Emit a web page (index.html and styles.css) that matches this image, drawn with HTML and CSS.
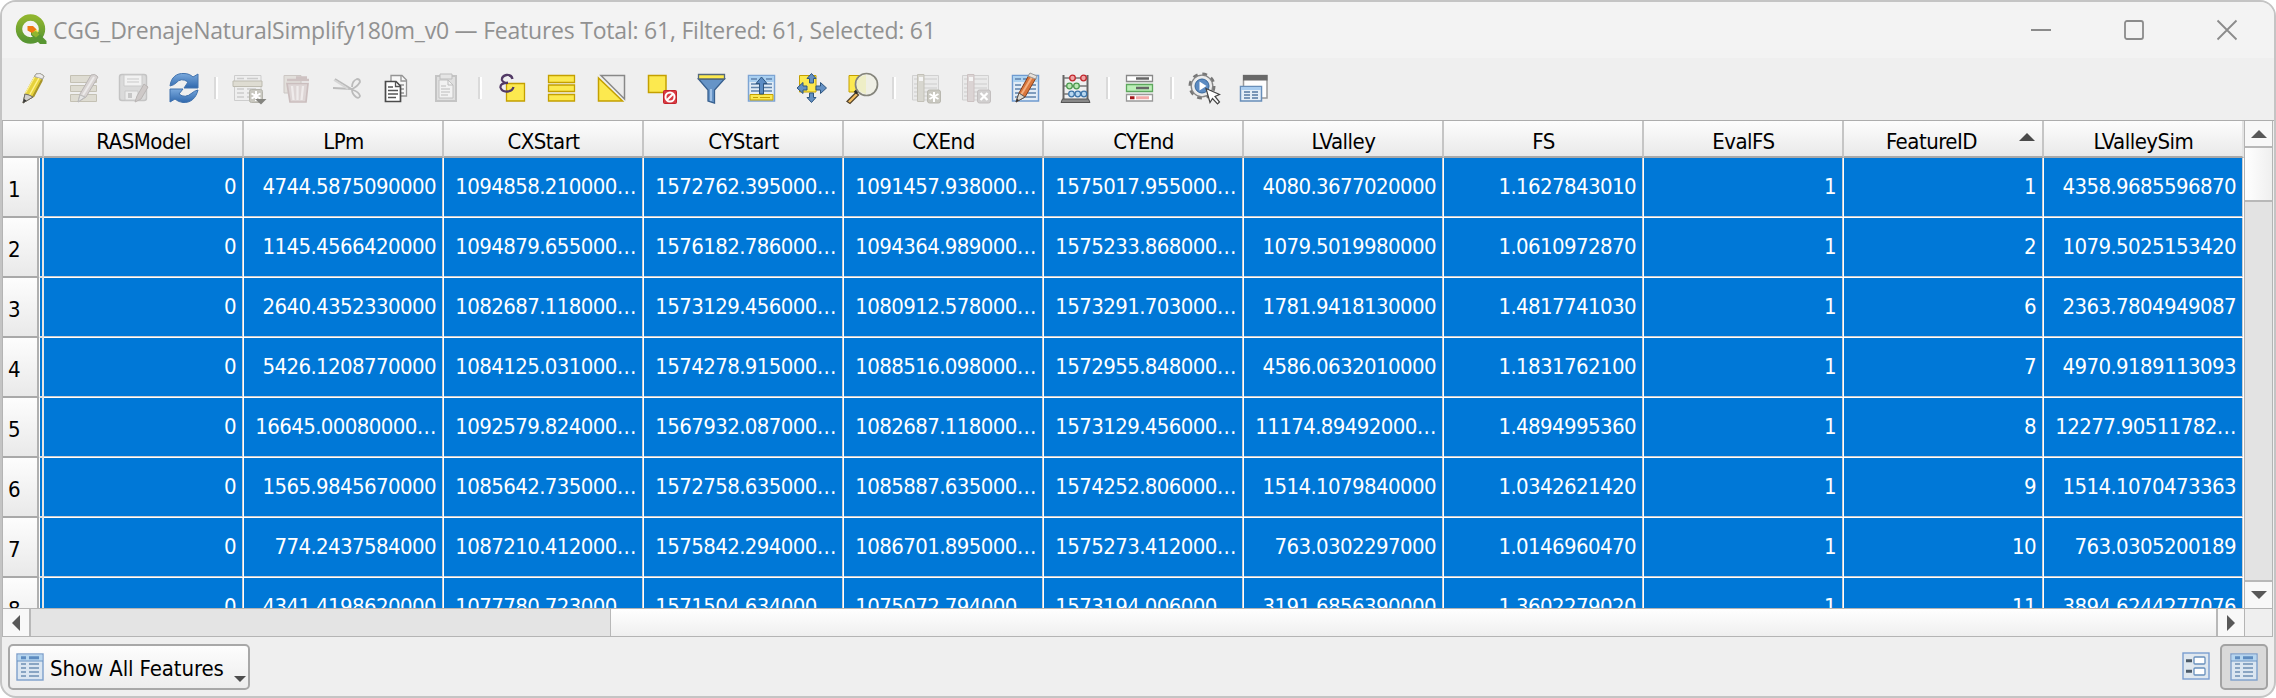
FILE: index.html
```html
<!DOCTYPE html>
<html lang="en">
<head>
<meta charset="utf-8">
<title>Attribute table</title>
<link rel="stylesheet" href="styles.css">
</head>
<body>
<svg width="0" height="0" class="defs">
  <defs>
    <linearGradient id="blue" x1="0" y1="0" x2="0" y2="1"><stop offset="0" stop-color="#7aa9dd"/><stop offset="1" stop-color="#2f68ad"/></linearGradient>
    <linearGradient id="qgreen" x1="0" y1="0" x2="0" y2="1"><stop offset="0" stop-color="#8fb52f"/><stop offset="1" stop-color="#589632"/></linearGradient>
    <symbol id="table" viewBox="0 0 28 28">
      <rect x="1" y="1" width="26" height="26" fill="#dbe6f1" stroke="#7d9fcb" stroke-width="1.4"/>
      <rect x="1.7" y="1.7" width="24.6" height="6" fill="#b5d5ef"/>
      <path d="M1 8H27" stroke="#6b93c3" stroke-width="1.2"/>
      <path d="M5 4.7H10M13 4.7H23" stroke="#5e8cc0" stroke-width="3"/>
      <path d="M5 11H10M13 11H23M5 15H10M13 15H23M5 19H10M13 19H23M5 23H10M13 23H23" stroke="#6f90b4" stroke-width="1.3"/>
    </symbol>
  </defs>
</svg>
<div class="window">
  <header class="titlebar">
    <svg class="logo" viewBox="0 0 32 32">
      <circle cx="15.5" cy="15" r="11.5" fill="none" stroke="url(#qgreen)" stroke-width="6.4"/>
      <path d="M16 16l4.500 0 11 11v3h-6.500l-9-9z" fill="#589632"/>
      <path d="M16.500 16.500l3-3 4 4-3.500 3.500z" fill="#f0e64a"/>
      <path d="M17 18l4-1 3.500 3.500-3.500 3-4-3z" fill="#8fb52f"/>
      <path d="M12.500 12h5.500l3.500 3.500-4.500 3.500-4.500-2.500z" fill="#ee7913"/>
    </svg>
    <h1 class="title">CGG_DrenajeNaturalSimplify180m_v0 — Features Total: 61, Filtered: 61, Selected: 61</h1>
    <div class="controls">
      <svg viewBox="0 0 22 22"><path d="M1 11H21" class="ctl"/></svg>
      <svg viewBox="0 0 22 22"><rect x="2" y="2" width="18" height="18" rx="2" class="ctl"/></svg>
      <svg viewBox="0 0 22 22"><path d="M1.500 1.500L20.500 20.500M20.500 1.500L1.500 20.500" class="ctl"/></svg>
    </div>
  </header>
  <nav class="toolbar">
    <svg class="ic" viewBox="0 0 32 32"><path d="M5 31L7 22 18 2Q22 0 26 4L15 25Z" fill="#e6d23c" stroke="#77703a"/><path d="M18 2Q22 0 26 4L24.500 7 16.500 4.500Z" fill="#eceaea" stroke="#aaa"/><path d="M16.500 5L7 22M21 6L11 24" stroke="#fff08a" stroke-width="1.500"/><path d="M24 8L15 25" stroke="#a8952a" stroke-width="2"/><path d="M5 31L7 22 11 23 15 25Z" fill="#d2d0cc" stroke="#6c6a66"/><path d="M5 31L6 27 8.500 28.500Z" fill="#333"/></svg>
    <svg class="ic" viewBox="0 0 32 32"><g fill="#dedcd2" stroke="#c4c1b4"><path d="M2.500 3.500H28.500V10.500H2.500ZM2.500 13.500H28.500V19.500H2.500ZM2.500 22.500H28.500V29.500H2.500Z"/></g><path d="M10 30L12 22 23 3Q27 1 30 5L18 25Z" fill="#d8d3d2" stroke="#b9b5b4"/><path d="M15 23L26 5" stroke="#eceaea" stroke-width="2"/><path d="M10 30L12 23 17 25Z" fill="#e5e5e5" stroke="#bbb"/></svg>
    <svg class="ic" viewBox="0 0 32 32"><rect x="1.500" y="2.500" width="27" height="26" rx="2.500" fill="#dadada" stroke="#c4c4c4" stroke-width="1.500"/><path d="M6 3H24V14H6Z" fill="#f2f2f2" stroke="#cacaca"/><path d="M9 7H21M9 10H21" stroke="#c9c9c9"/><path d="M7 19H20V28H7Z" fill="#ececec" stroke="#cacaca"/><path d="M10 21H14V26H10Z" fill="#c7c7c7"/><path d="M17 30L19 24 26 12 30 15 23 27Z" fill="#cec9c8" stroke="#b9b5b4"/></svg>
    <svg class="ic" viewBox="0 0 32 32"><path d="M2 14C3 5 9 1 16 1.500 20 1.500 23 3 25 5L30 2V16H16L20 10Q13 5 8 11Q6 13 2 14Z" fill="url(#blue)" stroke="#4474ae"/><path d="M30 18C28 26 23 31 15 30.500Q10 30 7 27L2 30V17H15L11 22Q17 27 24 21Q26 19 30 18Z" fill="url(#blue)" stroke="#3f71ad"/></svg>
    <i class="sep"></i>
    <svg class="ic" viewBox="0 0 32 32"><path d="M2.500 3.500H29V28.500H2.500Z" fill="#eee" stroke="#cdcdcd"/><path d="M5 6.500H12M15 6.500H26M5 17H12M15 17H24M5 21H12M15 21H19M5 25H12M15 25H19" stroke="#ccc" stroke-width="1.500"/><path d="M1 9H30V14.500H1Z" fill="#dedcd2" stroke="#bdbbb0"/><rect x="17.500" y="17.500" width="13" height="13" rx="2" fill="#c9c8c0" stroke="#b5b4ac"/><path d="M24 19V29M19.500 21.500L28.500 26.500M28.500 21.500L19.500 26.500" stroke="#fff" stroke-width="2"/><path d="M23 27H34.500L29 32.500Z" fill="#858580"/></svg>
    <svg class="ic" viewBox="0 0 32 32"><path d="M2 3.500H19V21H2Z" fill="#e2dfdb" stroke="#ccc7c4"/><path d="M5 8H27M14 5.500H25" fill="none" stroke="#cec2c2" stroke-width="2.500"/><path d="M5 11.500H26L24 30H8Z" fill="#ddd5d5" stroke="#cbbebe" stroke-width="1.700"/><path d="M10 14L11.500 28M15.500 14V28M21 14L19.500 28" stroke="#efebeb" stroke-width="2.300"/></svg>
    <svg class="ic" viewBox="0 0 32 32"><g fill="none" stroke="#bbb" stroke-width="1.800"><path d="M1 16L20 17Q25 15 28 10Q28 7 25 7Q20 9 20 15M3 7L21 18Q27 20 28 24Q27 27 24 25Q20 22 20 18"/><path d="M2 8L16 17" stroke="#d6d6d6"/></g></svg>
    <svg class="ic" viewBox="0 0 32 32"><g fill="#f7f7f7" stroke="#949494" stroke-width="1.300"><path d="M9 3.500H20L24.500 8V24H9Z"/><path d="M19 4V9H24M18 13H22M19 17H22M19 21H22" fill="none"/></g><path d="M3.500 9.500H14L18.500 14V29.500H3.500Z" fill="#fff" stroke="#4b4b4b" stroke-width="1.700"/><path d="M13.500 9.500V14.500H18.500M6 15H11M6 18.500H16M6 22H16M6 25.500H14" fill="none" stroke="#555" stroke-width="1.300"/></svg>
    <svg class="ic" viewBox="0 0 32 32"><path d="M4 4H24V29H4Z" fill="#dfdfdf" stroke="#c4c4c4" stroke-width="2"/><path d="M7 8H16L21 13V26H7Z" fill="#f2f2f2" stroke="#c2c2c2"/><path d="M8 2H20V7H8Z" fill="#e5e5e5" stroke="#bdbdbd"/><path d="M16 8V13H21M9 14H14M9 17H18M9 20H18M9 23H16" fill="none" stroke="#bcbcbc"/></svg>
    <i class="sep"></i>
    <svg class="ic" viewBox="0 0 32 32"><path d="M10.500 11.500H28.500V29H10.500Z" fill="#fce94f" stroke="#c4a000" stroke-width="1.300"/><path d="M16.500 7Q15.500 2.500 10.500 3Q5.500 4 6 8Q7 11 12 10.800Q4 11 4.500 15.500Q6 20 11.500 19.500Q16.500 19 17.500 15" fill="none" stroke="#523a66" stroke-width="2.300"/></svg>
    <svg class="ic" viewBox="0 0 32 32"><path d="M2.500 3.500H28.500V10.500H2.500ZM2.500 13H28.500V19.500H2.500ZM2.500 22.500H28.500V29H2.500Z" fill="#fce94f" stroke="#c4a000" stroke-width="1.300"/></svg>
    <svg class="ic" viewBox="0 0 32 32"><path d="M5 3.500H28.500V27Z" fill="#ebebeb" stroke="#888" stroke-width="1.500"/><path d="M2.500 6V29H26.500Z" fill="#fce94f" stroke="#c4a000" stroke-width="1.500"/></svg>
    <svg class="ic" viewBox="0 0 32 32"><path d="M2.500 3.500H20V20.500H2.500Z" fill="#fce94f" stroke="#c4a000" stroke-width="1.500"/><rect x="17.500" y="18.500" width="13" height="13" rx="1" fill="#d83b43" stroke="#c32229"/><circle cx="24" cy="25" r="4.500" fill="none" stroke="#fff" stroke-width="2"/><path d="M21 28L27 22" stroke="#fff" stroke-width="2"/></svg>
    <svg class="ic" viewBox="0 0 32 32"><path d="M2.500 7L12 18V29L18.500 31V18L28.500 7Z" fill="#6694c7" stroke="#375f8e" stroke-width="1.300"/><path d="M15 17V29" stroke="#9fc0e5" stroke-width="2"/><path d="M2.500 2.500H28.500V7H2.500Z" fill="#fce94f" stroke="#55687b" stroke-width="1.300"/></svg>
    <svg class="ic" viewBox="0 0 32 32"><path d="M2.500 3.500H28.500V29H2.500Z" fill="#e1ecf6" stroke="#7da4d3" stroke-width="1.500"/><path d="M3 4H28V10H3Z" fill="#a9cff0"/><path d="M5 7H11M20 7H26M5 12H26M5 15.500H26M5 19H26" stroke="#5f83ac" stroke-width="1.300"/><path d="M4 22.500H27V28H4Z" fill="#fce94f" stroke="#c4a000"/><path d="M7 25.500H12M14 25.500H24" stroke="#c4a000"/><path d="M15.500 5L21 11.500H17.500V22H13.500V11.500H10Z" fill="#5b8cc4" stroke="#2f5680"/></svg>
    <svg class="ic" viewBox="0 0 32 32"><path d="M3.500 3.500H20V20H3.500Z" fill="#fce94f" stroke="#c4a000"/><g fill="#6390c3" stroke="#2f5680"><path d="M15.500 1.500L20 6.500H17.500V11H13.500V6.500H11Z"/><path d="M15.500 30.500L20 25.500H17.500V21H13.500V25.500H11Z"/><path d="M1 16L7 10.500V14H11V18H7V21.500Z"/><path d="M30.500 16L24.500 10.500V14H20V18H24.500V21.500Z"/></g></svg>
    <svg class="ic" viewBox="0 0 32 32"><path d="M3 3.500H19V20H3Z" fill="#fce94f" stroke="#c4a000"/><path d="M1 29.500L10 20.500 12.500 23 4 31.500Z" fill="#f4be60" stroke="#54452c" stroke-width="1.300"/><path d="M9 21L13 17" stroke="#292929" stroke-width="3.500"/><circle cx="20.500" cy="12.500" r="11" fill="#efefe5" stroke="#85857c" stroke-width="1.700"/><path d="M11 9.500Q12 4.500 20 3V22Q12 20 11 15Z" fill="#eeeec6"/></svg>
    <i class="sep"></i>
    <svg class="ic" viewBox="0 0 32 32"><path d="M2.500 3.500H28.500V28H2.500Z" fill="#eaeaea" stroke="#d1d1d1"/><path d="M4 7H27M4 12H27M4 16H27M4 20H27M4 24H18" stroke="#ccc"/><path d="M7.500 2.500H14V29.500H7.500Z" fill="#d8d7d0" stroke="#c3c1b8"/><path d="M9 5H13V9H9Z" fill="#f5f5f5"/><rect x="17.500" y="18" width="13" height="13" rx="2" fill="#c9c8c0" stroke="#b9b8b0"/><path d="M24 20V30M19.500 22L28.500 27M28.500 22L19.500 27" stroke="#fff" stroke-width="2"/></svg>
    <svg class="ic" viewBox="0 0 32 32"><path d="M2.500 3.500H28.500V28H2.500Z" fill="#eaeaea" stroke="#d1d1d1"/><path d="M4 7H27M4 12H27M4 16H27M4 20H27M4 24H18" stroke="#ccc"/><path d="M7.500 2.500H14V29.500H7.500Z" fill="#dbd4d4" stroke="#ccc2c2"/><path d="M9 5H13V9H9Z" fill="#f5f5f5"/><rect x="17.500" y="18" width="13" height="13" rx="2" fill="#d1cfcf" stroke="#c3bfbf"/><path d="M20.500 21L27.500 28M27.500 21L20.500 28" stroke="#fff" stroke-width="2.300"/></svg>
    <svg class="ic" viewBox="0 0 32 32"><path d="M2.500 3.500H28.500V29H2.500Z" fill="#e3edf6" stroke="#6f9bd0" stroke-width="1.500"/><path d="M3 4H28V10H3Z" fill="#add2f0"/><path d="M5 7H11M13 7H24M5 13H11M13 13H26M5 17H11M13 17H26M5 21H11M13 21H26M5 25H11M13 25H26" stroke="#5f83ac" stroke-width="1.300"/><path d="M6 30L9 21 19 3 26 6 15 25Z" fill="#d9763c" stroke="#843f1b"/><path d="M11 23L22 5" stroke="#f5b07f" stroke-width="2"/><path d="M18 4L20 1 27 4 25.500 7Z" fill="#e7e1db" stroke="#999"/><path d="M6 30L9 21 15 25Z" fill="#ddd8cf" stroke="#555"/><path d="M6 30L7 27 9 28Z" fill="#222"/></svg>
    <svg class="ic" viewBox="0 0 32 32"><path d="M3.500 3V27M27.500 3V27" stroke="#666" stroke-width="2"/><path d="M4 6H27M4 14H27M4 22H27" stroke="#777" stroke-width="1.500"/><path d="M2.500 27H28.500L30 30.500H1Z" fill="#888" stroke="#555"/><g stroke-width="1.300"><g fill="#f1a6a6" stroke="#c1272d"><circle cx="12.500" cy="6" r="2.800"/><circle cx="23.500" cy="6" r="2.800"/></g><g fill="#bce9b4" stroke="#4e9a50"><circle cx="9.500" cy="14" r="2.800"/><circle cx="16.500" cy="14" r="2.800"/></g><g fill="#b9d8f0" stroke="#3f76aa"><circle cx="11.500" cy="22" r="2.800"/><circle cx="17.800" cy="22" r="2.800"/><circle cx="24" cy="22" r="2.800"/></g></g></svg>
    <i class="sep"></i>
    <svg class="ic" viewBox="0 0 32 32"><g stroke-width="1.300"><path d="M2.500 3.500H28.500V9.500H2.500Z" fill="#fff" stroke="#888"/><path d="M2.500 12.500H28.500V19.500H2.500Z" fill="#bdf0b8" stroke="#5ea75d"/><path d="M2.500 22.500H28.500V29H2.500Z" fill="#fff" stroke="#999"/></g><path d="M12 6.500H25M12 16H25" stroke="#666" stroke-width="2.300"/><path d="M6 25.700H10.500" stroke="#a4161a" stroke-width="3"/><path d="M12 25.700H25" stroke="#f2a9a9" stroke-width="3"/></svg>
    <i class="sep"></i>
    <svg class="ic" viewBox="0 0 32 32"><circle cx="14" cy="14" r="12" fill="none" stroke="#777" stroke-width="3" stroke-dasharray="4.700 4.720"/><circle cx="14" cy="14" r="10.800" fill="#ececec" stroke="#858585" stroke-width="1.300"/><circle cx="14" cy="14" r="7" fill="#5c8bc2" stroke="#386799"/><path d="M11.500 9.500L18.500 14 11.500 18.500Z" fill="#fff"/><path d="M18 16.500L31.500 22.500 27 24.500 31.500 30 29.500 32 24.500 26.500 22 30.500Z" fill="#fff" stroke="#444" stroke-width="1.200"/></svg>
    <svg class="ic" viewBox="0 0 32 32"><path d="M5.500 3.500H29V26H5.500Z" fill="#fdfdfd" stroke="#999" stroke-width="1.500"/><path d="M5 3H29.500V8.500H5Z" fill="#686868"/><path d="M2.500 14.500H23.500V29H2.500Z" fill="#e5eef7" stroke="#688eb9" stroke-width="1.500"/><path d="M3.200 15H23V18H3.200Z" fill="#a9cdf0"/><path d="M6 20H12M14 20H20M6 23H12M14 23H20M6 26H12M14 26H20" stroke="#5679a3" stroke-width="1.500"/></svg>
  </nav>
  <main class="view">
    <div class="grid" id="grid"></div>
    <div class="vbar">
      <div class="arrow up"><svg viewBox="0 0 16 8"><path d="M0 8L8 0 16 8Z"/></svg></div>
      <div class="vthumb"></div>
      <div class="vtrack"></div>
      <div class="arrow down"><svg viewBox="0 0 16 8"><path d="M0 0L8 8 16 0Z"/></svg></div>
    </div>
    <div class="hbar">
      <div class="harrow left"><svg viewBox="0 0 8 16"><path d="M8 0L0 8 8 16Z"/></svg></div>
      <div class="htrack"></div>
      <div class="hthumb"></div>
      <div class="harrow right"><svg viewBox="0 0 8 16"><path d="M0 0L8 8 0 16Z"/></svg></div>
    </div>
    <div class="corner"></div>
  </main>
  <footer class="status">
    <button class="filter"><svg class="tbl" viewBox="0 0 28 28"><use href="#table"/></svg><span>Show All Features</span><svg class="drop" viewBox="0 0 12 6"><path d="M0 0H12L6 6Z"/></svg></button>
    <svg class="form" viewBox="0 0 28 28"><rect x="1" y="1" width="26" height="26" fill="#e0e8ef" stroke="#7b9fd0" stroke-width="1.400"/><path d="M4 8.700H10M4 19.300H10" stroke="#4d5b69" stroke-width="3"/><rect x="12" y="5" width="11" height="7" rx="1" fill="#fff" stroke="#6890bd" stroke-width="1.300"/><rect x="12" y="16" width="11" height="7" rx="1" fill="#fff" stroke="#6890bd" stroke-width="1.300"/></svg>
    <button class="tableview"><svg class="tbl" viewBox="0 0 28 28"><use href="#table"/></svg></button>
  </footer>
</div>
<script src="table.js"></script>
</body>
</html>
```
FILE: styles.css
```css
* { box-sizing: border-box; }
body { margin: 0; background: #fff; width: 2276px; height: 698px; overflow: hidden; }
.defs { display: block; height: 0; }
.window {
  width: 2276px; height: 698px; border: 2px solid #c4c4c4; border-radius: 16px;
  background: #efefef; overflow: hidden; display: flex; flex-direction: column;
  font-family: "DejaVu Sans Condensed", "DejaVu Sans", sans-serif; font-stretch: condensed;
  font-size: 22px; color: #000;
}
.titlebar { height: 56px; flex: none; background: #f3f3f3; display: flex; align-items: center; padding: 0 36px 0 13px; }
.logo { width: 32px; height: 32px; }
.title {
  margin: 0 0 0 6px; font: 400 23px/30px "Open Sans", "Noto Sans", sans-serif;
  color: #919191; white-space: nowrap; letter-spacing: -0.22px;
}
.controls { margin-left: auto; display: flex; gap: 71px; }
.controls svg { width: 22px; height: 22px; }
.ctl { fill: none; stroke: #8b8b8b; stroke-width: 1.8; }
.toolbar { height: 62px; flex: none; display: flex; align-items: center; gap: 18px; padding: 0 0 2px 16px; }
.ic { width: 32px; height: 32px; overflow: visible; flex: none; }
.sep { width: 4px; height: 22px; background: #fff; border-left: 2px solid #dadada; margin: 0 -4px; flex: none; }
.view {
  height: 517px; flex: none; display: grid; grid-template-columns: 2241px 29px; grid-template-rows: 487px 29px;
  border-top: 1px solid #adadad; border-left: 1px solid #b4b4b4;
}
.grid { overflow: hidden; background: #fff; }
.row { display: flex; height: 60px; }
.row.head { height: 37px; }
.hc {
  width: 200px; flex: none; background: linear-gradient(#fdfdfd, #f3f3f3 50%, #e9e9e9);
  border-right: 2px solid #c5c5c5; border-bottom: 2px solid #a9a9a9;
  display: flex; align-items: center; justify-content: center; letter-spacing: -0.5px; position: relative; padding: 5px 0 0 1px;
}
.hc.first { width: 41px; }
.hc.sorted { padding-right: 24px; }
.hc:last-child { border-right-color: #e4e4e4; }
.sort { position: absolute; right: 7px; top: 12px; width: 16px; height: 8px; fill: #4a4a4a; }
.rh {
  width: 36px; flex: none; background: linear-gradient(#fdfdfd, #f3f3f3 50%, #e9e9e9);
  border-right: 2px solid #b0b0b0; border-bottom: 2px solid #a9a9a9; padding: 4px 0 0 5px; line-height: 56px; letter-spacing: -0.5px;
}
.strip { width: 5px; flex: none; background: #0078d7; border-left: 1px solid #fff; border-right: 2px solid #e6e6e6; border-bottom: 2px solid #e2e2e2; }
.c {
  width: 200px; flex: none; background: #0078d7; color: #fff; text-align: right; line-height: 58px;
  padding-right: 7px; border-right: 1px solid #fff; border-bottom: 1px solid #fff;
  box-shadow: inset -1px -1px #c9ccd0;
  letter-spacing: -0.6px; white-space: nowrap; overflow: hidden;
}
.vbar { display: flex; flex-direction: column; border-left: 1px solid #b4b4b4; border-right: 1px solid #b4b4b4; }
.arrow { height: 27px; flex: none; background: #f8f8f8; display: flex; align-items: center; justify-content: center; }
.arrow svg { width: 16px; height: 8px; fill: #585858; }
.up { border-bottom: 2px solid #b8b8b8; }
.down { height: 28px; border-top: 2px solid #b8b8b8; }
.vthumb { height: 54px; flex: none; background: linear-gradient(90deg, #fff, #efefef); border-bottom: 2px solid #b8b8b8; }
.vtrack { flex: 1; background: #e3e3e3; }
.hbar { display: flex; border-top: 1px solid #b4b4b4; border-bottom: 1px solid #b4b4b4; }
.harrow { width: 28px; flex: none; background: #f8f8f8; display: flex; align-items: center; justify-content: center; }
.harrow svg { width: 8px; height: 16px; fill: #585858; }
.left { border-right: 2px solid #b8b8b8; }
.right { border-left: 2px solid #b8b8b8; }
.htrack { width: 580px; flex: none; background: #e4e4e4; border-right: 1px solid #b8b8b8; }
.hthumb { flex: 1; background: linear-gradient(#fff, #efefef); }
.corner { border: 1px solid #b4b4b4; background: #efefef; }
.status { flex: 1; display: flex; align-items: flex-start; padding: 7px 6px 0 6px; }
button { font: inherit; padding: 0; color: inherit; }
.filter {
  width: 242px; height: 46px; border: 2px solid #a8a8a8; border-radius: 5px; background: linear-gradient(#fdfdfd, #ededed);
  display: flex; align-items: center; padding-left: 6px; letter-spacing: -0.1px; white-space: nowrap;
}
.filter span { margin: 3px 0 0 6px; }
.tbl, .form { width: 28px; height: 28px; flex: none; }
.drop { width: 12px; height: 6px; margin: 24px 2px 0 auto; fill: #4d4d4d; flex: none; }
.form { margin: 8px 10px 0 auto; }
.tableview { width: 48px; height: 46px; border: 2px solid #a3a3a3; border-radius: 5px; background: #d9d9d9; display: flex; align-items: center; justify-content: center; }
```
FILE: table.js
```js
const columns = ["RASModel","LPm","CXStart","CYStart","CXEnd","CYEnd","LValley","FS","EvalFS","FeatureID","LValleySim"];
const rows = [
  ["0","4744.5875090000","1094858.210000…","1572762.395000…","1091457.938000…","1575017.955000…","4080.3677020000","1.1627843010","1","1","4358.9685596870"],
  ["0","1145.4566420000","1094879.655000…","1576182.786000…","1094364.989000…","1575233.868000…","1079.5019980000","1.0610972870","1","2","1079.5025153420"],
  ["0","2640.4352330000","1082687.118000…","1573129.456000…","1080912.578000…","1573291.703000…","1781.9418130000","1.4817741030","1","6","2363.7804949087"],
  ["0","5426.1208770000","1084125.031000…","1574278.915000…","1088516.098000…","1572955.848000…","4586.0632010000","1.1831762100","1","7","4970.9189113093"],
  ["0","16645.00080000…","1092579.824000…","1567932.087000…","1082687.118000…","1573129.456000…","11174.89492000…","1.4894995360","1","8","12277.90511782…"],
  ["0","1565.9845670000","1085642.735000…","1572758.635000…","1085887.635000…","1574252.806000…","1514.1079840000","1.0342621420","1","9","1514.1070473363"],
  ["0","774.2437584000","1087210.412000…","1575842.294000…","1086701.895000…","1575273.412000…","763.0302297000","1.0146960470","1","10","763.0305200189"],
  ["0","4341.4198620000","1077780.723000…","1571504.634000…","1075072.794000…","1573194.006000…","3191.6856390000","1.3602279020","1","11","3894.6244277076"]
];
const arrow = '<svg class="sort" viewBox="0 0 16 8"><path d="M0 8L8 0 16 8Z"/></svg>';
const head = '<div class="row head"><div class="hc first"></div>' +
  columns.map(c => c === "FeatureID" ? `<div class="hc sorted">${c}${arrow}</div>` : `<div class="hc">${c}</div>`).join("") + "</div>";
const body = rows.map((r, i) => `<div class="row"><div class="rh">${i + 1}</div><div class="strip"></div>` +
  r.map(v => `<div class="c">${v}</div>`).join("") + "</div>").join("");
document.getElementById("grid").innerHTML = head + body;
```
